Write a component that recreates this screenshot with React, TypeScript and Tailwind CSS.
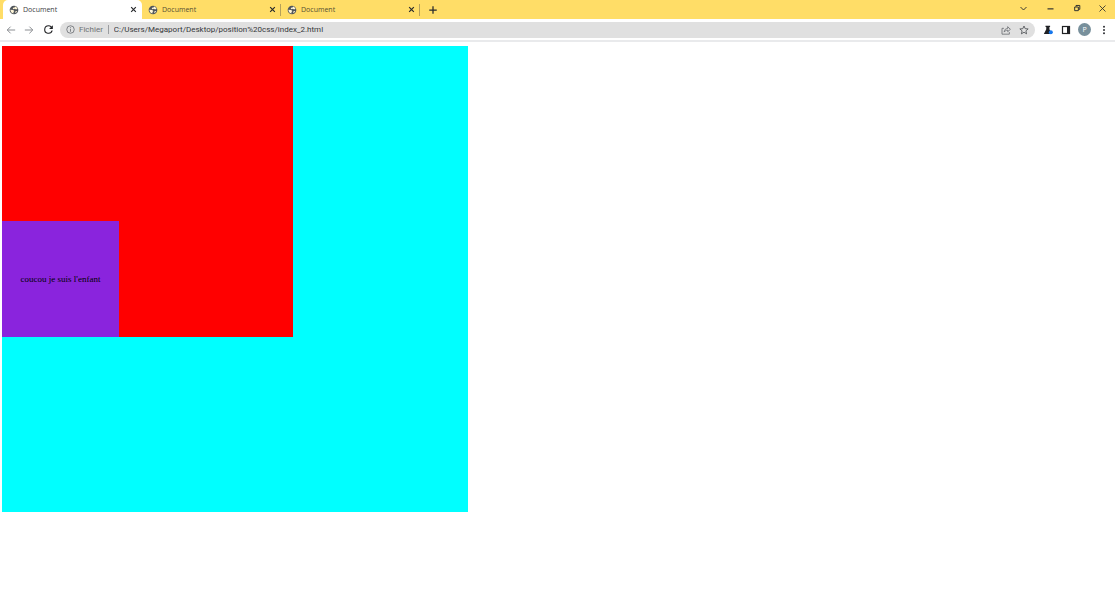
import type { ReactNode } from 'react';

const tabs = [
  { id: 1, title: 'Document', active: true },
  { id: 2, title: 'Document', active: false },
  { id: 3, title: 'Document', active: false },
];

function Globe() {
  return (
    <svg viewBox="0 0 24 24" className="size-[10px] shrink-0" aria-hidden="true">
      <circle cx="12" cy="12" r="10.4" fill="#50555b" />
      <path
        fill="#fff6d8"
        d="M14.5 3.4C17.2 4.2 19.5 6.4 20.4 9.2L17 10.5L14 8.8L10.5 10L8.8 8.2L11 6.2L13.6 6ZM3.4 11.5L9.8 12.2L12.8 14.6L10.8 17L10.5 20.4C6.4 19.8 3.4 16 3.4 11.5ZM15.5 15.2L19.8 14.4C19 16.8 17.4 18.8 15 19.8Z"
      />
    </svg>
  );
}

function Stroke({ d, className, width = 1, children }: { d: string; className: string; width?: number; children?: ReactNode }) {
  return (
    <svg viewBox="0 0 12 12" className={className} fill="none" stroke="currentColor" strokeWidth={width} aria-hidden="true">
      <path d={d} />
      {children}
    </svg>
  );
}

function IconButton({ label, className = '', children }: { label: string; className?: string; children: ReactNode }) {
  return (
    <button type="button" aria-label={label} className={`flex h-4 shrink-0 items-center justify-center ${className}`}>
      {children}
    </button>
  );
}

function TabStrip() {
  return (
    <header className="flex h-[19px] bg-[#ffdd67] text-[#27292c]">
      <div role="tablist" className="flex pl-[3px]">
        {tabs.map((tab) => (
          <div
            key={tab.id}
            className={`flex w-[139px] items-center pl-[6px] ${tab.active ? 'rounded-t-[5px] bg-white' : ''}`}
          >
            <button type="button" role="tab" aria-selected={tab.active} className="flex flex-1 items-center gap-1 text-left text-[7px] leading-[10px]">
              <Globe />
              <span className={tab.active ? 'text-[#3c4043]' : 'text-[#574f32]'}>{tab.title}</span>
            </button>
            <IconButton label="Fermer l'onglet" className="w-2">
              <Stroke d="M2 2L10 10M10 2L2 10" width={2} className="size-[7px]" />
            </IconButton>
            <span className={`ml-[4px] h-3 w-px shrink-0 ${tab.active ? '' : 'bg-[#b5a05a]'}`} />
          </div>
        ))}
      </div>
      <IconButton label="Nouvel onglet" className="mt-[2px] ml-[7px] w-3">
        <Stroke d="M6 1.5V10.5M1.5 6H10.5" width={1.5} className="size-[10px]" />
      </IconButton>
      <div className="ml-auto flex">
        <IconButton label="Rechercher dans les onglets" className="w-[27px]">
          <Stroke d="M2 4L6 8L10 4" width={1.2} className="size-[9px]" />
        </IconButton>
        <IconButton label="Réduire" className="w-[27px]">
          <Stroke d="M2 6.5H10" width={1.5} className="size-[9px]" />
        </IconButton>
        <IconButton label="Restaurer" className="w-[26px]">
          <Stroke d="M2.5 4.5H8V10H2.5ZM4.5 4V2.2H10.2V8H8.5" width={1.4} className="size-[8px]" />
        </IconButton>
        <IconButton label="Fermer" className="w-[25px]">
          <Stroke d="M2 2L10 10M10 2L2 10" width={1.1} className="size-[9px]" />
        </IconButton>
      </div>
    </header>
  );
}

function Toolbar() {
  return (
    <nav className="flex h-[23px] items-center border-b-2 border-[#e9eaec] bg-white text-[#202124]">
      <IconButton label="Précédent" className="ml-[1px] w-[19px] text-[#8b8e92]">
        <Stroke d="M11 6H1.5M5.5 2L1.5 6L5.5 10" width={1.2} className="size-[10px]" />
      </IconButton>
      <IconButton label="Suivant" className="w-[18px] text-[#8b8e92]">
        <Stroke d="M1 6H10.5M6.5 2L10.5 6L6.5 10" width={1.2} className="size-[10px]" />
      </IconButton>
      <IconButton label="Actualiser" className="w-[20px]">
        <svg viewBox="0 0 24 24" className="size-[13px]" fill="currentColor" aria-hidden="true">
          <path d="M17.65 6.35A7.96 7.96 0 0 0 12 4a8 8 0 1 0 7.73 10h-2.08A6 6 0 1 1 12 6c1.66 0 3.14.69 4.22 1.78L13 11h7V4z" />
        </svg>
      </IconButton>
      <div className="ml-[2px] flex h-4 min-w-0 flex-1 items-center rounded-full bg-[#e0e0e0] pr-[5px] pl-[6px] font-['Roboto',sans-serif] text-[8px] leading-[12px]">
        <Stroke d="M6 5.3V9M6 3V4.3" width={1} className="size-[9px] shrink-0 text-[#5f6368]">
          <circle cx="6" cy="6" r="5" />
        </Stroke>
        <label htmlFor="address" className="ml-[4px] text-[#6d7175]">Fichier</label>
        <span className="mx-[5px] h-[9px] w-px shrink-0 bg-[#9b9da0]" />
        <input
          id="address"
          type="text"
          defaultValue="C:/Users/Megaport/Desktop/position%20css/index_2.html"
          className="h-4 min-w-0 flex-1 bg-transparent text-[#35373a] outline-none"
        />
        <IconButton label="Partager" className="w-[18px] text-[#6b6e72]">
          <Stroke d="M3.5 4H1.2V11H10V8.5M3.8 8.5C4 5.5 5.5 4.3 8 4.2V2L11.3 5.2L8 8V6.2C6.2 6.2 5 6.8 3.8 8.5Z" className="size-[10px]" />
        </IconButton>
        <IconButton label="Ajouter aux favoris" className="ml-[3px] w-3 text-[#4d5054]">
          <Stroke d="M6 1.2L7.4 4.4L11 4.7L8.3 7L9.1 10.6L6 8.7L2.9 10.6L3.7 7L1 4.7L4.6 4.4Z" className="size-[10px]" />
        </IconButton>
      </div>
      <IconButton label="Expériences" className="ml-[6px] w-[14px]">
        <svg viewBox="0 0 12 12" className="size-[10px]" aria-hidden="true">
          <path fill="#202124" d="M3 1H8.5V2.3H7.7V5L10.7 10.8H1L3.9 5V2.3H3Z" />
          <circle cx="9.4" cy="8.8" r="2.4" fill="#1677ed" />
        </svg>
      </IconButton>
      <IconButton label="Panneau latéral" className="ml-[3px] w-[16px]">
        <svg viewBox="0 0 10 10" className="size-[10px]" aria-hidden="true">
          <rect x="1.5" y="1.5" width="7" height="7" fill="none" stroke="#202124" strokeWidth="1.2" />
          <rect x="6" y="1.5" width="2.5" height="7" fill="#202124" />
        </svg>
      </IconButton>
      <IconButton label="Profil" className="ml-[4px] w-[13px]">
        <span className="flex size-[13px] items-center justify-center rounded-full bg-[#78909c] text-[7px] leading-none text-white">P</span>
      </IconButton>
      <IconButton label="Menu" className="mr-[6px] ml-[7px] w-[11px]">
        <svg viewBox="0 0 10 10" className="size-[10px]" fill="#303236" aria-hidden="true">
          <circle cx="5" cy="1.8" r="1" />
          <circle cx="5" cy="5" r="1" />
          <circle cx="5" cy="8.2" r="1" />
        </svg>
      </IconButton>
    </nav>
  );
}

export default function App() {
  return (
    <div className="min-h-screen bg-white font-['Open_Sans','Noto_Sans',sans-serif]">
      <TabStrip />
      <Toolbar />
      <main className="px-[2px] pt-1 pb-4">
        <div className="size-[466px] bg-[#00ffff]">
          <div className="flex size-[291px] items-end bg-[#ff0000]">
            <div className="flex h-[116px] w-[117px] items-center justify-center bg-[#8a24dd]">
              <p className="font-['Liberation_Serif',serif] text-[9px] leading-[12px] whitespace-nowrap text-black">coucou je suis l'enfant</p>
            </div>
          </div>
        </div>
      </main>
    </div>
  );
}
